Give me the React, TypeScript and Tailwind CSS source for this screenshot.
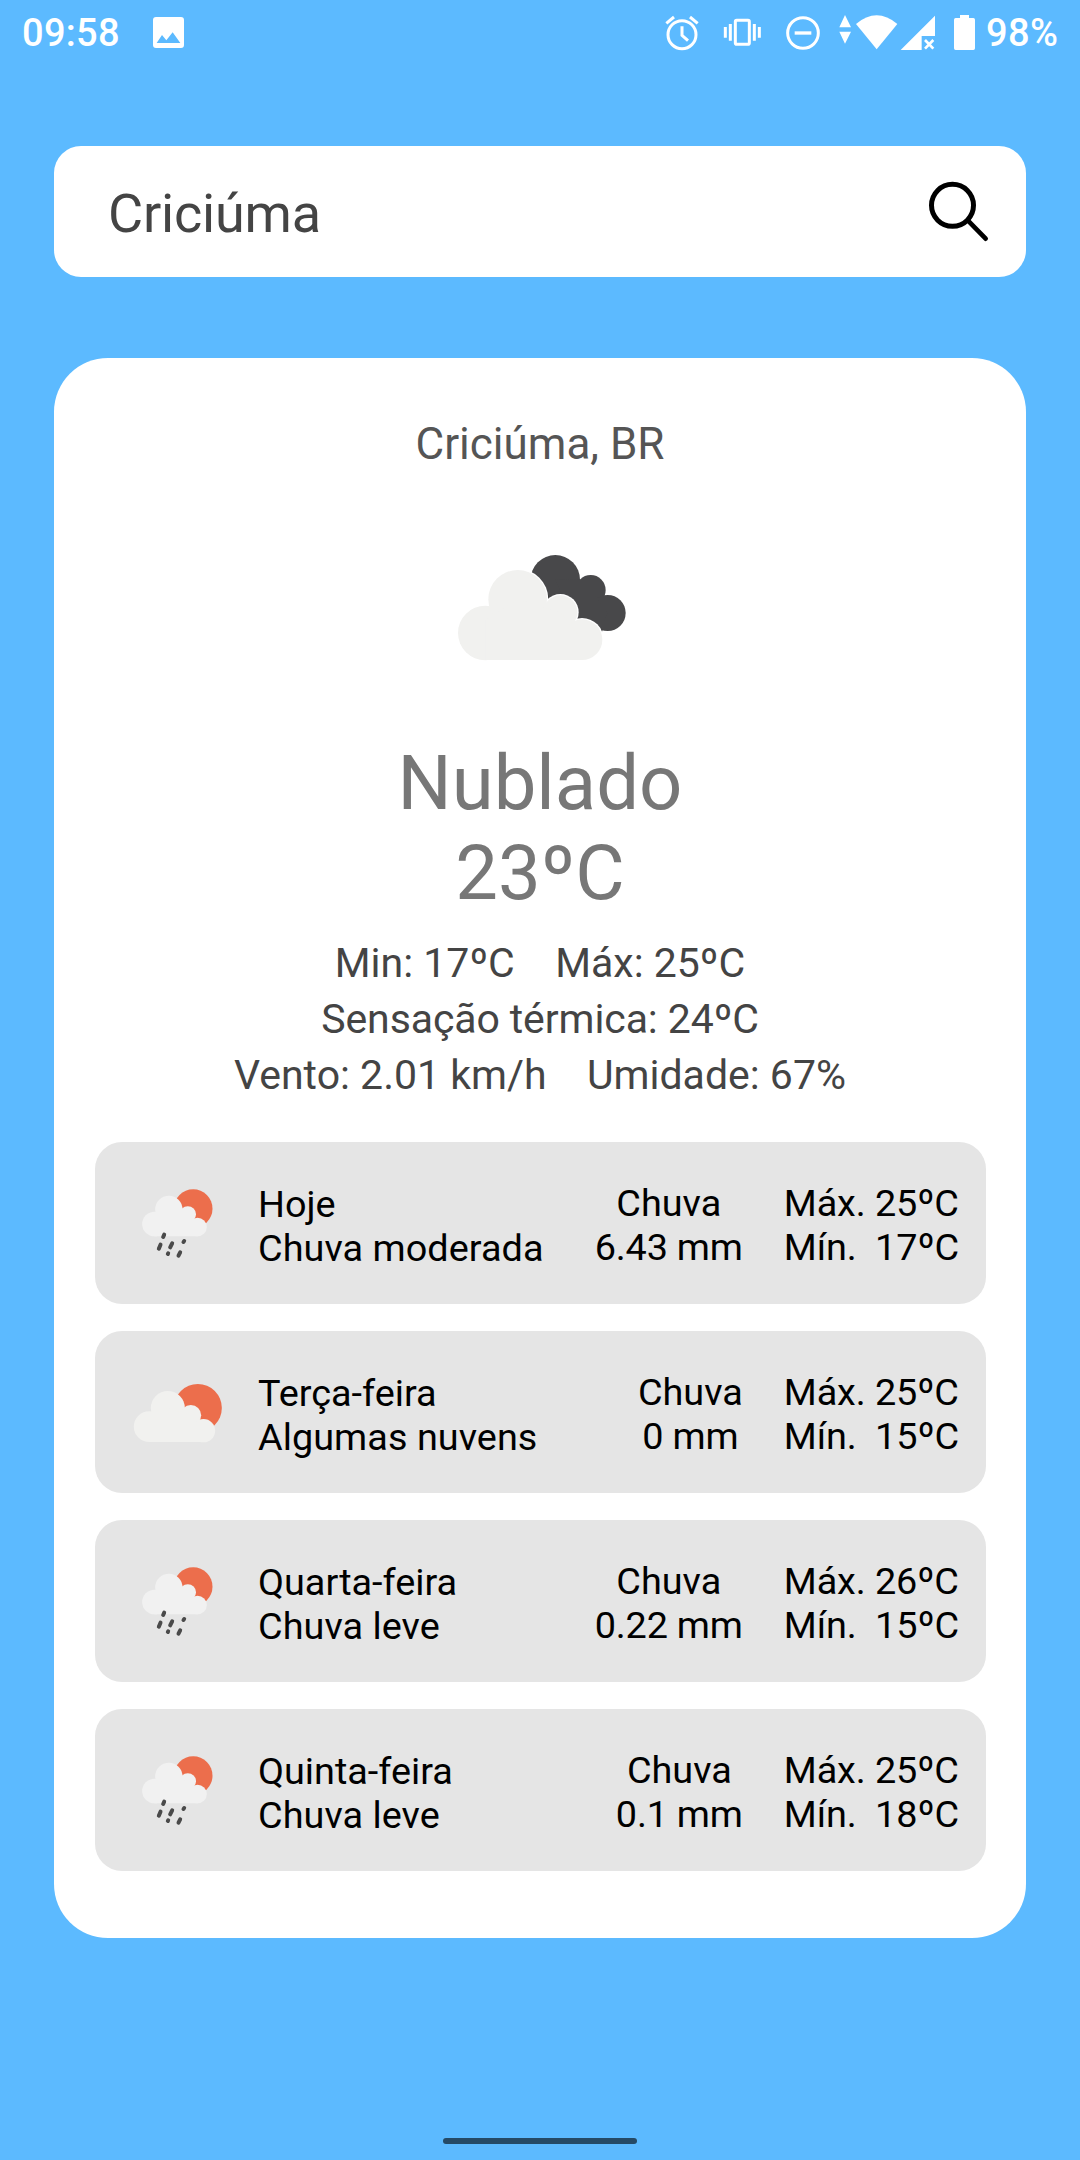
import type { ReactNode } from "react";

type IconKind = "rain" | "partly";

interface Forecast {
  day: string;
  description: string;
  rain: string;
  max: number;
  min: number;
  icon: IconKind;
}

const forecasts: Forecast[] = [
  { day: "Hoje", description: "Chuva moderada", rain: "6.43 mm", max: 25, min: 17, icon: "rain" },
  { day: "Terça-feira", description: "Algumas nuvens", rain: "0 mm", max: 25, min: 15, icon: "partly" },
  { day: "Quarta-feira", description: "Chuva leve", rain: "0.22 mm", max: 26, min: 15, icon: "rain" },
  { day: "Quinta-feira", description: "Chuva leve", rain: "0.1 mm", max: 25, min: 18, icon: "rain" },
];

function StatusBar() {
  return (
    <header className="flex h-[70px] items-center pl-[22px] text-[38px] font-medium leading-[67px] tracking-[0.3px] text-white">
      <span className="h-[70px] w-[130px]">09:58</span>
      <svg className="h-[70px] w-[32px] shrink-0" viewBox="456 0 96 210" fill="#fff">
        <path
          fillRule="evenodd"
          d="M468 51H543Q552 51 552 60V135Q552 144 543 144H468Q459 144 459 135V60Q459 51 468 51ZM470 129H541L518 97L499 121L486 105Z"
        />
      </svg>
      <div className="ml-auto flex h-[70px]">
        <svg className="h-[70px] w-[50px]" viewBox="60 0 150 210" fill="none" stroke="#fff">
          <circle cx="126" cy="104" r="42" strokeWidth="9" />
          <path d="M126 79V106L144 122" strokeWidth="9" />
          <path d="M79 70L102 51M150 51L173 70" strokeWidth="9" />
        </svg>
        <svg className="h-[70px] w-[60px]" viewBox="210 0 180 210" fill="none" stroke="#fff">
          <rect x="286" y="61" width="42" height="72" rx="4" strokeWidth="9" />
          <path d="M271 72V122M343 72V122M256 81V113M358 81V113" strokeWidth="9" />
        </svg>
        <svg className="h-[70px] w-[60px]" viewBox="390 0 180 210" fill="none" stroke="#fff">
          <circle cx="489" cy="99" r="46" strokeWidth="9" />
          <path d="M464 99H514" strokeWidth="10" />
        </svg>
        <svg className="h-[70px] w-[70px]" viewBox="570 0 210 210" fill="#fff">
          <path d="M615 45L633 82H598ZM598 95H633L615 131Z" />
          <path d="M648 72Q710 20 772 72L710 148Z" />
        </svg>
        <svg className="h-[70px] w-[45px]" viewBox="780 0 135 210" fill="#fff">
          <path d="M782 150L885 47V108H845V150Z" />
          <path d="M855 120L880 146M880 120L855 146" stroke="#fff" strokeWidth="8" />
        </svg>
        <svg className="h-[70px] w-[40px]" viewBox="915 0 120 210" fill="#fff">
          <path d="M960 45H987V54H1000Q1005 54 1005 59V145Q1005 150 1000 150H947Q942 150 942 145V59Q942 54 947 54H960Z" />
        </svg>
        <span className="w-[95px] pl-px tracking-[0.4px]">98%</span>
      </div>
    </header>
  );
}

function SearchBar() {
  return (
    <div className="mx-[54px] mt-[76px] flex h-[131px] items-center justify-between rounded-[27px] bg-white pl-[54px]">
      <span className="pt-[5px] text-[54px] leading-[64px] tracking-[-0.2px] text-[#444]">Criciúma</span>
      <svg className="h-[131px] w-[106px]" viewBox="120 48 318 393" fill="none" stroke="#000">
        <circle cx="217.5" cy="226" r="63" strokeWidth="15" />
        <path d="M264 272L317 326" strokeWidth="14" strokeLinecap="round" />
      </svg>
    </div>
  );
}

function BrokenClouds() {
  return (
    <svg className="h-[140px] w-[200px]" viewBox="0 0 600 420">
      <g fill="#48484a">
        <circle cx="346" cy="119" r="74" />
        <circle cx="452" cy="150" r="45" />
        <circle cx="503" cy="219" r="54" />
        <path d="M346 119L420 118L452 150L503 219L480 270L400 240Z" />
      </g>
      <path d="M276 98Q316 120 327 175Q396 140 415 235Q460 230 488 272L470 290L300 200Z" fill="#2b2b2d" />
      <g fill="#fff">
        <circle cx="233" cy="178" r="92" />
        <circle cx="361" cy="217" r="55" />
        <circle cx="426" cy="299" r="65" />
      </g>
      <g fill="#f1f1ef">
        <circle cx="136" cy="279" r="82" />
        <circle cx="233" cy="178" r="88" />
        <circle cx="361" cy="217" r="51" />
        <circle cx="426" cy="299" r="61" />
        <path d="M136 360V240L233 178L361 217L426 299V360Z" />
      </g>
    </svg>
  );
}

function FewClouds() {
  return (
    <svg className="h-[162px] w-[135px] shrink-0" viewBox="85.5 33 405 486">
      <circle cx="352" cy="264" r="72" fill="#ec6e4c" />
      <g fill="#f1f1ef">
        <circle cx="206" cy="320" r="46" />
        <circle cx="262" cy="264" r="51" />
        <circle cx="331" cy="286" r="31" />
        <circle cx="369" cy="332" r="35" />
        <path d="M206 366V300L262 264L331 286L369 332V366Z" />
      </g>
    </svg>
  );
}

function RainClouds() {
  return (
    <svg className="h-[162px] w-[135px] shrink-0" viewBox="85.5 36 405 486">
      <circle cx="338" cy="236" r="58" fill="#ec6e4c" />
      <g fill="#f1f1f1">
        <circle cx="222" cy="282" r="37" />
        <circle cx="265" cy="238" r="41" />
        <circle cx="322" cy="253" r="24.5" />
        <circle cx="351" cy="291" r="28" />
        <path d="M222 319V270L265 238L322 253L351 291V319Z" />
      </g>
      <path
        d="M251 314L248 321M240 344L235 356M275 340L269 352M311 333L309 336M263 370L262 372M299 367L294 377"
        fill="none"
        stroke="#4a4a4a"
        strokeWidth="12"
        strokeLinecap="round"
      />
    </svg>
  );
}

const icons: Record<IconKind, ReactNode> = {
  rain: <RainClouds />,
  partly: <FewClouds />,
};

function ForecastRow({ item }: { item: Forecast }) {
  return (
    <li className="flex h-[162px] items-start rounded-[27px] bg-[#e5e5e5] pl-[13.5px] pr-[27px] text-[37.8px] leading-[44px] text-black">
      {icons[item.icon]}
      <div className="ml-[14.5px] mt-[40px]">
        <p>{item.day}</p>
        <p className="tracking-[0.05px]">{item.description}</p>
      </div>
      <div className="ml-auto mt-[39px] text-center">
        <p>Chuva</p>
        <p className="tracking-[-0.2px]">{item.rain}</p>
      </div>
      <div className="ml-[41px] mt-[39px] whitespace-pre tracking-[-0.1px]">
        <p>{`Máx. ${item.max}ºC`}</p>
        <p>{`Mín.  ${item.min}ºC`}</p>
      </div>
    </li>
  );
}

export default function App() {
  return (
    <div className="flex h-[2160px] w-[1080px] flex-col overflow-hidden bg-[#5cbaff] font-['Roboto',sans-serif]">
      <StatusBar />
      <SearchBar />
      <main className="mx-[54px] mt-[81px] flex h-[1580px] flex-col rounded-[54px] bg-white pt-[61px]">
        <h1 className="text-center text-[44px] leading-[50px] text-[#555]">Criciúma, BR</h1>
        <div className="mt-[71px] flex justify-center">
          <BrokenClouds />
        </div>
        <div className="mt-[58px] text-center text-[76px] leading-[90px] text-[#777]">
          <p>Nublado</p>
          <p>23ºC</p>
        </div>
        <div className="mt-[17px] text-center text-[41px] leading-[56px] text-[#444]">
          <p className="flex justify-center gap-[40.5px]">
            <span>Min: 17ºC</span>
            <span>Máx: 25ºC</span>
          </p>
          <p className="tracking-[-0.1px]">Sensação térmica: 24ºC</p>
          <p className="flex justify-center gap-[40.5px]">
            <span>Vento: 2.01 km/h</span>
            <span>Umidade: 67%</span>
          </p>
        </div>
        <ul className="ml-[41px] mr-[40px] mt-[39px] flex flex-col gap-[27px]">
          {forecasts.map((item) => (
            <ForecastRow key={item.day} item={item} />
          ))}
        </ul>
      </main>
      <div className="mx-auto mb-[16px] mt-auto h-[6px] w-[194px] rounded-full bg-[#254a66]" />
    </div>
  );
}
